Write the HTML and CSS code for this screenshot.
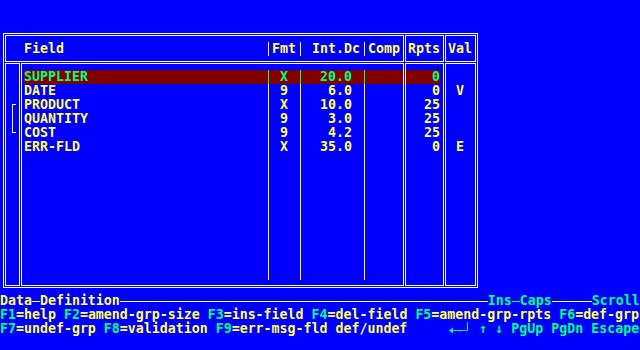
FILE: index.html
```html
<!DOCTYPE html>
<html>
<head>
<meta charset="utf-8">
<title>Data-Definition</title>
<link rel="stylesheet" href="styles.css">
</head>
<body>
<div class="screen">
  <div class="row"></div>
  <div class="row"></div>
  <div class="row"></div>
  <div class="trow head"><span class="c"></span><span class="c f">Field</span><span class="c sep"></span><span class="c fmt">Fmt</span><span class="c sep"></span><span class="c int">Int.Dc</span><span class="c sep"></span><span class="c comp">Comp</span><span class="c box"></span><span class="c rpts">Rpts</span><span class="c box"></span><span class="c val">Val</span></div>
  <div class="row"></div>
  <div class="trow sel"><span class="c"></span><span class="c f">SUPPLIER</span><span class="c sep"></span><span class="c fmt">X</span><span class="c sep"></span><span class="c int">20.0</span><span class="c sep"></span><span class="c comp"></span><span class="c box"></span><span class="c rpts">0</span><span class="c box"></span><span class="c val"></span></div>
  <div class="trow"><span class="c"></span><span class="c f">DATE</span><span class="c sep"></span><span class="c fmt">9</span><span class="c sep"></span><span class="c int">6.0</span><span class="c sep"></span><span class="c comp"></span><span class="c box"></span><span class="c rpts">0</span><span class="c box"></span><span class="c val">V</span></div>
  <div class="trow"><span class="c"></span><span class="c f">PRODUCT</span><span class="c sep"></span><span class="c fmt">X</span><span class="c sep"></span><span class="c int">10.0</span><span class="c sep"></span><span class="c comp"></span><span class="c box"></span><span class="c rpts">25</span><span class="c box"></span><span class="c val"></span></div>
  <div class="trow"><span class="c"></span><span class="c f">QUANTITY</span><span class="c sep"></span><span class="c fmt">9</span><span class="c sep"></span><span class="c int">3.0</span><span class="c sep"></span><span class="c comp"></span><span class="c box"></span><span class="c rpts">25</span><span class="c box"></span><span class="c val"></span></div>
  <div class="trow"><span class="c"></span><span class="c f">COST</span><span class="c sep"></span><span class="c fmt">9</span><span class="c sep"></span><span class="c int">4.2</span><span class="c sep"></span><span class="c comp"></span><span class="c box"></span><span class="c rpts">25</span><span class="c box"></span><span class="c val"></span></div>
  <div class="trow"><span class="c"></span><span class="c f">ERR-FLD</span><span class="c sep"></span><span class="c fmt">X</span><span class="c sep"></span><span class="c int">35.0</span><span class="c sep"></span><span class="c comp"></span><span class="c box"></span><span class="c rpts">0</span><span class="c box"></span><span class="c val">E</span></div>
  <div class="trow"><span class="c"></span><span class="c f"></span><span class="c sep"></span><span class="c fmt"></span><span class="c sep"></span><span class="c int"></span><span class="c sep"></span></div>
  <div class="trow"><span class="c"></span><span class="c f"></span><span class="c sep"></span><span class="c fmt"></span><span class="c sep"></span><span class="c int"></span><span class="c sep"></span></div>
  <div class="trow"><span class="c"></span><span class="c f"></span><span class="c sep"></span><span class="c fmt"></span><span class="c sep"></span><span class="c int"></span><span class="c sep"></span></div>
  <div class="trow"><span class="c"></span><span class="c f"></span><span class="c sep"></span><span class="c fmt"></span><span class="c sep"></span><span class="c int"></span><span class="c sep"></span></div>
  <div class="trow"><span class="c"></span><span class="c f"></span><span class="c sep"></span><span class="c fmt"></span><span class="c sep"></span><span class="c int"></span><span class="c sep"></span></div>
  <div class="trow"><span class="c"></span><span class="c f"></span><span class="c sep"></span><span class="c fmt"></span><span class="c sep"></span><span class="c int"></span><span class="c sep"></span></div>
  <div class="trow"><span class="c"></span><span class="c f"></span><span class="c sep"></span><span class="c fmt"></span><span class="c sep"></span><span class="c int"></span><span class="c sep"></span></div>
  <div class="trow"><span class="c"></span><span class="c f"></span><span class="c sep"></span><span class="c fmt"></span><span class="c sep"></span><span class="c int"></span><span class="c sep"></span></div>
  <div class="trow"><span class="c"></span><span class="c f"></span><span class="c sep"></span><span class="c fmt"></span><span class="c sep"></span><span class="c int"></span><span class="c sep"></span></div>
  <div class="row"></div>
  <div class="row"><span>Data</span><span class="ln n1"></span><span>Definition</span><span class="ln n46"></span><span class="g">Ins</span><span class="ln n1 g"></span><span class="g">Caps</span><span class="ln n5"></span><span class="g">Scroll</span></div>
  <div class="row"><span class="g">F1</span>=help <span class="g">F2</span>=amend-grp-size <span class="g">F3</span>=ins-field <span class="g">F4</span>=del-field <span class="g">F5</span>=amend-grp-rpts <span class="g">F6</span>=def-grp</div>
  <div class="row"><span class="g">F7</span>=undef-grp <span class="g">F8</span>=validation <span class="g">F9</span>=err-msg-fld def/undef     <span class="enter g"><svg width="24" height="14" viewBox="0 0 24 14"><polygon points="2,8.5 6,5.5 6,11.5" fill="currentColor"/><path d="M6 8.5H20.5V0" fill="none" stroke="currentColor" stroke-width="1"/></svg></span> <span class="g">↑</span> <span class="g">↓</span> <span class="g">PgUp</span> <span class="g">PgDn</span> <span class="g">Escape</span></div>
  <div class="row"></div>

  <svg class="frame" width="640" height="350" viewBox="0 0 640 350">
    <g fill="none" stroke="#ffffff" stroke-width="1" shape-rendering="crispEdges">
      <rect x="3.5" y="33.5" width="474" height="254"/>
      <rect x="5.5" y="35.5" width="398" height="26"/>
      <rect x="405.5" y="35.5" width="38" height="26"/>
      <rect x="445.5" y="35.5" width="30" height="26"/>
      <rect x="5.5" y="63.5" width="14" height="222"/>
      <rect x="21.5" y="63.5" width="382" height="222"/>
      <rect x="405.5" y="63.5" width="38" height="222"/>
      <rect x="445.5" y="63.5" width="30" height="222"/>
    </g>
    <path d="M16 104.5H12.5V132.5H16" fill="none" stroke="#ffff55" stroke-width="1" shape-rendering="crispEdges"/>
  </svg>
</div>
</body>
</html>
```

FILE: styles.css
```css
html, body {
  margin: 0;
  padding: 0;
  background: #0000ff;
}

body {
  width: 640px;
  height: 350px;
  overflow: hidden;
}

.screen {
  position: relative;
  width: 640px;
  height: 350px;
  background: #0000ff;
  color: #ffff55;
  font-family: "DejaVu Sans Mono", "Liberation Mono", monospace;
  font-weight: bold;
  font-size: 13.288px;
  line-height: 14px;
}

.row {
  height: 14px;
  white-space: pre;
}

.trow {
  display: grid;
  grid-template-columns: 24px 240px 8px 24px 8px 56px 8px 32px 8px 32px 8px 24px;
  height: 14px;
  white-space: pre;
}

.c {
  display: block;
  overflow: hidden;
  height: 14px;
}

.fmt,
.val {
  text-align: center;
}

.int,
.rpts {
  text-align: right;
}

.int {
  padding-right: 8px;
}

.head .int {
  padding-right: 0;
}

.sep {
  background: linear-gradient(currentColor, currentColor) no-repeat 4px 0 / 1px 100%;
}

.sel {
  color: #00ff80;
}

.sel .c:nth-child(n+2):nth-child(-n+10) {
  background-color: #800000;
}

.g {
  color: #00ff80;
}

.ln {
  display: inline-block;
  vertical-align: top;
  height: 14px;
  background: linear-gradient(currentColor, currentColor) no-repeat 0 7px / 100% 1px;
}

.n1 { width: 8px; }
.n5 { width: 40px; }
.n46 { width: 368px; }

.enter {
  display: inline-block;
  vertical-align: top;
  width: 24px;
  height: 14px;
}

.enter svg {
  display: block;
}

.frame {
  position: absolute;
  left: 0;
  top: 0;
  pointer-events: none;
}
```
